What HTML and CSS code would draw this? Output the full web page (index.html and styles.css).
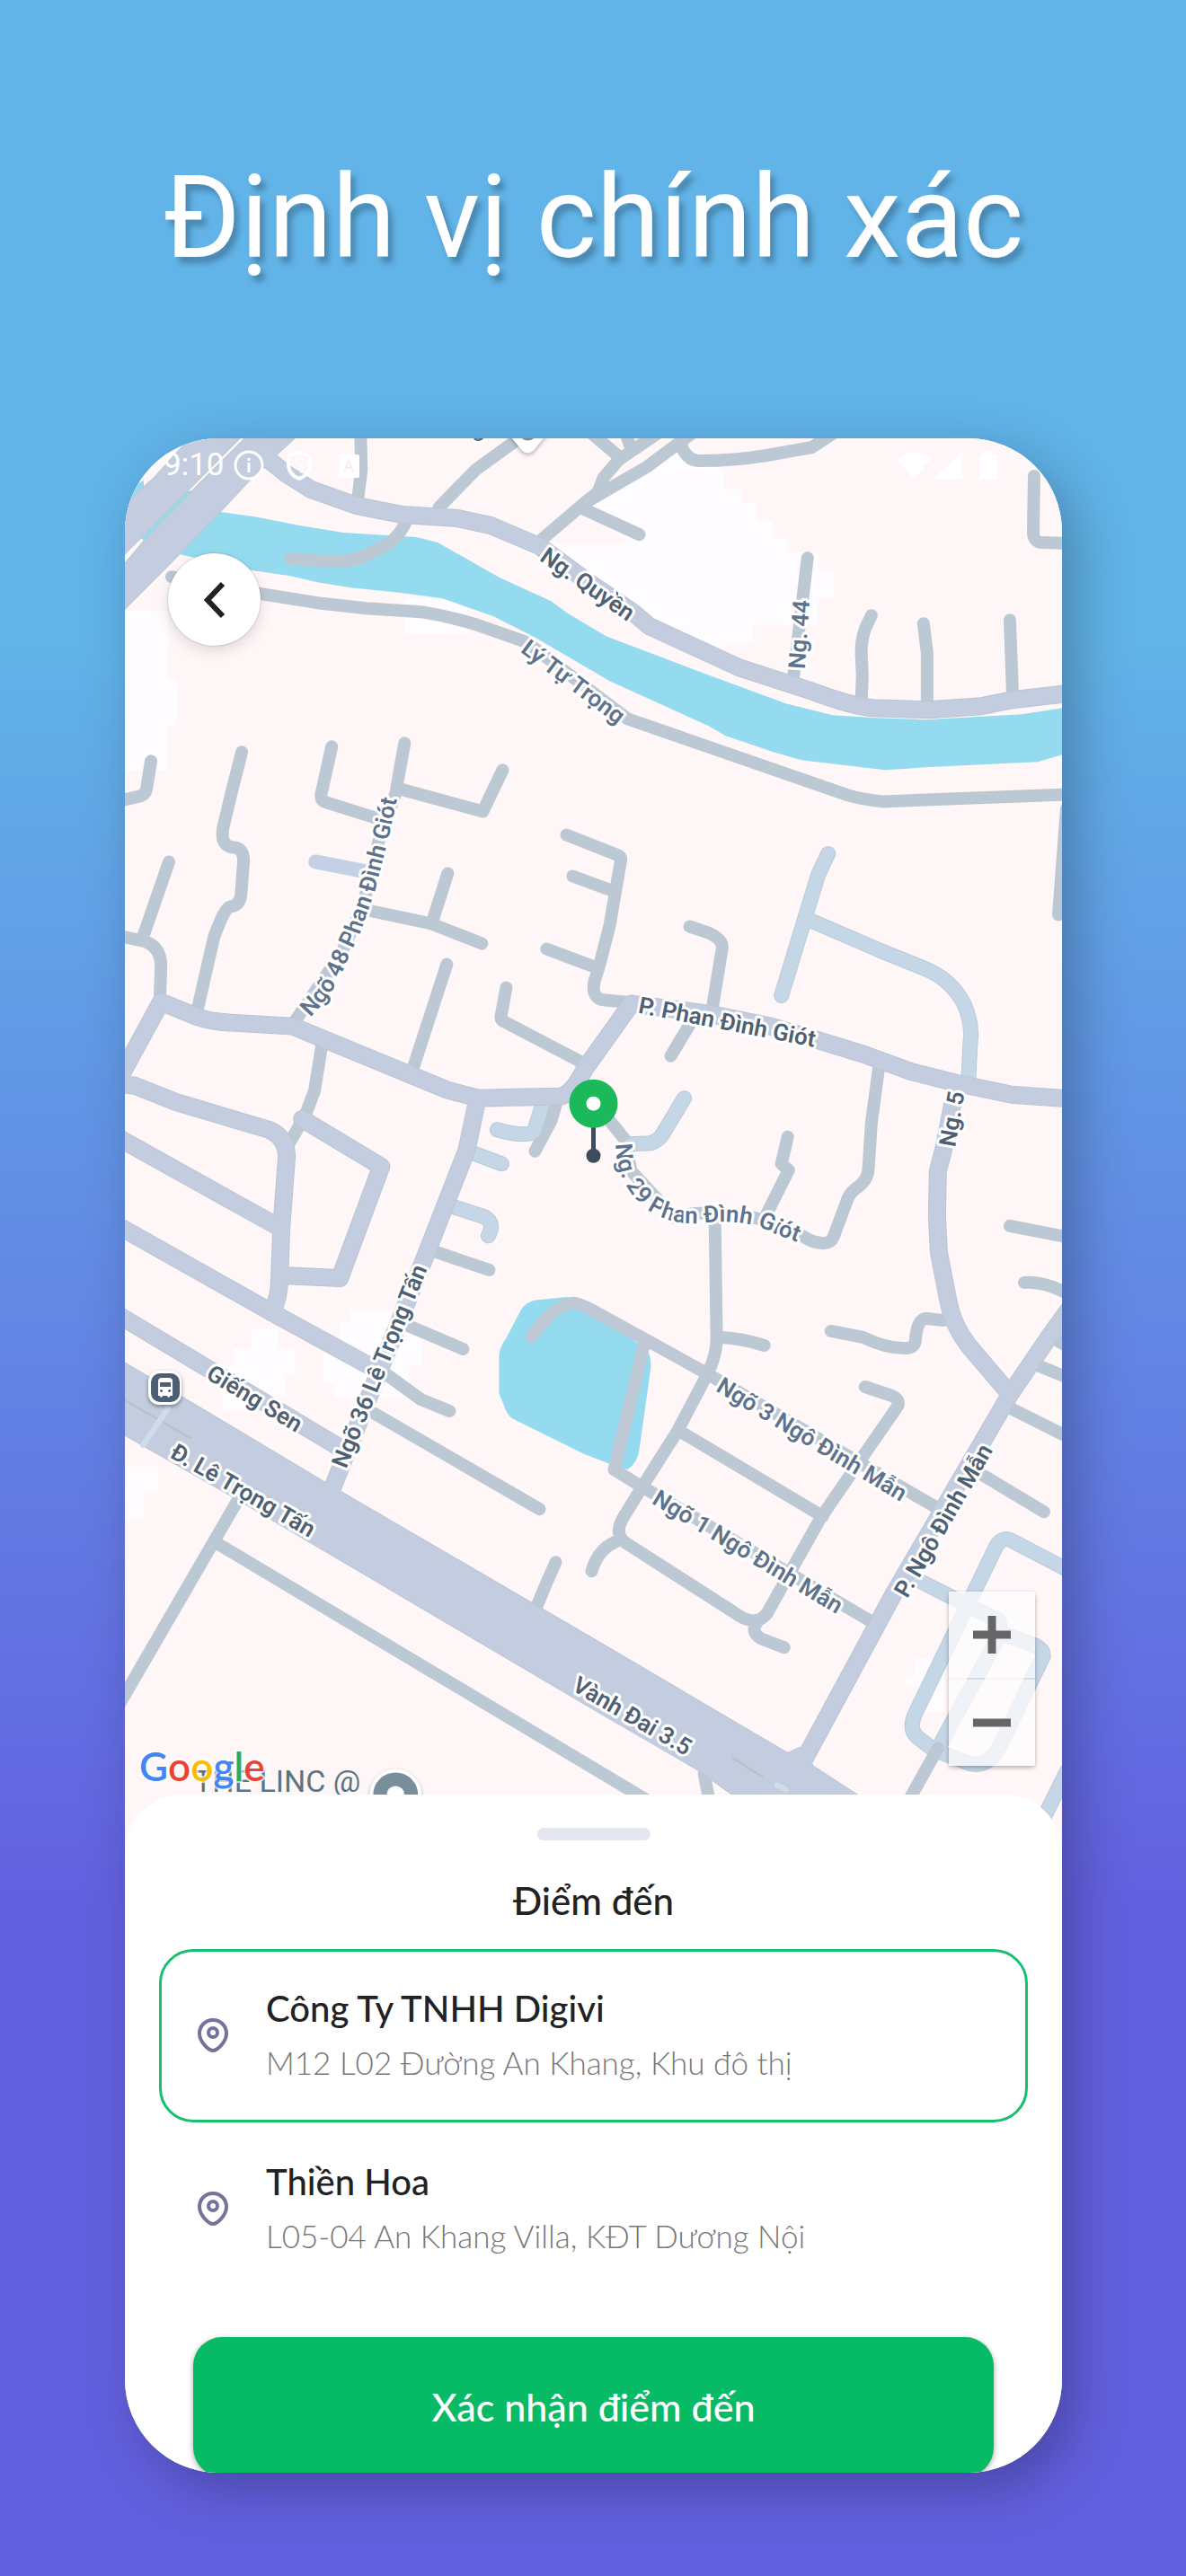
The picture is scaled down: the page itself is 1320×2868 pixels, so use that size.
FILE: index.html
```html
<!DOCTYPE html>
<html lang="vi">
<head>
<meta charset="utf-8">
<meta name="viewport" content="width=device-width, initial-scale=1">
<title>Định vị chính xác</title>
<link rel="stylesheet" href="styles.css">
</head>
<body>
<main class="promo">
  <h1 class="promo-title">Định vị chính xác</h1>

  <section class="phone">
    <div class="map">
      <svg class="map-canvas" viewBox="139 488 1042 1570" preserveAspectRatio="xMidYMin slice" role="img" aria-label="Bản đồ">
        <defs>
          <g id="major-roads">
            <path d="M299 512L319 528L346 545L397 563L448 573L509 577L546 585L600 608L650 645L702 680L722 697L822 743L905 770Q945 785 970 788L1032 790L1091 786L1125 779L1195 771"/>
            <path d="M702 1117L788 1128L857 1142L908 1157L960 1173L1012 1192L1063 1205L1125 1218L1195 1223"/>
            <path d="M702 1117L650 1190Q636 1218 623 1220L569 1221L532 1222L498 1213L326 1142L258 1138Q235 1137 221 1132L179 1115L130 1205"/>
            <path d="M130 1206L150 1208L198 1227L299 1257Q318 1265 319 1286L313 1367L311 1420Q311 1445 302 1460"/>
            <path d="M336 1245L424 1298L378 1422L313 1419"/>
            <path d="M130 1265L313 1367"/>
            <path d="M130 1363L302 1460L417 1523"/>
            <path d="M130 1462L377 1610"/>
            <path d="M531 1223L519 1280L471 1403L368 1660"/>
            <path d="M1063 1210L1049 1280L1043 1303L1042 1353L1044 1393L1055 1450Q1060 1475 1077 1497L1122 1550"/>
            <path d="M1190 1455L1167 1487L1124 1550L1091 1607L994 1773L893 1960"/>
          </g>
          <g id="light-roads">
            <path d="M921 950L910 973L869 1108M903 1025L977 1057L1029 1078Q1058 1090 1072 1117Q1082 1140 1079 1160L1077 1200"/>
            <path d="M526 1283L558 1295M505 1343L539 1354Q551 1361 543 1375"/>
            <path d="M553 1257Q585 1266 594 1259L603 1230"/>
            <path d="M702 1273L724 1272Q734 1268 738 1260L761 1222"/>
            <path d="M1190 1748L1125 1714Q1113 1708 1106 1724L1017 1908Q1010 1926 1022 1934L1039 1947L1078 1962Q1100 1968 1113 1940L1160 1843Q1161 1836 1152 1831L1113 1817L1111 1803L1070 1783L1015 1755M1111 1820L1046 1940"/>
            <path d="M1186 1971L1160 2024"/>
          </g>
        </defs>

        <rect class="land" x="139" y="488" width="1042" height="1570"/>
        <path class="block" d="M139 680H187V755H197V807H187V858H139ZM560 605H700L640 560L690 545L760 490L805 525V545H825V560H842V580H860V600H876V615H910V635H927V665H910V695H838V716H805V735L720 695L600 620ZM450 666H520V706H450ZM280 1478H310V1500H328V1530H318V1555H275V1570H248V1520H260V1500H280ZM390 1458H440V1480H470V1520H455V1555H372V1540H360V1490H378V1470H390ZM139 1632H176V1660H160V1690H139ZM1018 1845H1050V1905H1030V1875H1008V1865H1018Z"/>
        <path class="water" d="M245 570L282 575L333 585L382 593L431 596L463 598L487 604L556 643L613 669L632 683L674 708L771 745L874 783L926 796L974 799L1029 801L1136 795L1181 788V840L1154 848L1029 854L984 857L891 846L860 837L807 819L788 808L678 758L596 710L549 686L492 666L448 660L390 654L353 648L323 641L282 635L199 617ZM215 546L160 602L150 592L200 548ZM139 560V545L160 535V550Z"/>
        <path class="water" d="M578 1460Q584 1447 600 1446L630 1443L650 1450L710 1495Q724 1500 724 1520L711 1613Q709 1628 698 1635L676 1628L650 1618L573 1580Q566 1577 562 1568L555 1550V1508Q556 1498 564 1487Z"/>

        <g class="minor">
          <path d="M401 480L402 523L398 555M580 486L529 523L488 565M451 582Q440 605 417 613Q395 626 372 625L323 622"/>
          <path d="M603 600L650 560L665 548L671 532L688 512L735 480M650 560L719 520L770 482M655 480L688 508M695 480L702 500M757 493Q762 513 779 513Q815 513 853 507L903 498L930 480M650 567L711 595"/>
          <path d="M898 621L882 757M969 685L962 700Q957 715 958 730L959 752L958 777M1027 694L1031 727V782M1123 690L1126 772M1150 530L1149 592Q1149 603 1158 604L1190 605"/>
          <path d="M191 642L240 653L353 671L407 677L468 681Q500 686 529 695L586 715L698 800L943 885Q960 890 981 892L1190 884"/>
          <path d="M168 847L163 878Q162 884 156 886L130 892M269 837L258 880L248 922Q245 943 261 943Q271 944 271 958L268 997Q266 1008 256 1009Q250 1010 238 1043L220 1122"/>
          <path d="M369 831L357 885Q357 891 363 893L417 910M450 827L441 877L537 903L559 857M441 880L421 937L404 1007L380 1060L329 1135"/>
          <path d="M188 959L159 1043M130 1041L159 1047Q181 1053 179 1080L178 1107M414 1014L480 1028L536 1050M498 972L480 1028M497 1073L460 1187M563 1099L557 1132Q557 1136 563 1138L647 1182"/>
          <path d="M630 929L688 952Q692 954 690 960L678 1030L667 1073L661 1092Q657 1112 673 1113L695 1115M637 975L683 992M608 1056L664 1077M767 1031L788 1038Q805 1046 803 1056L792 1123M767 1140L746 1175M1186 900L1177 1018M358 1163L350 1213L340 1240L323 1270"/>
          <path d="M618 1230L613 1247L595 1281M431 1530L468 1557L500 1570M485 1393L544 1413M454 1475L515 1501M417 1573L600 1679"/>
          <path class="minor-ponds" d="M591 1487Q620 1448 640 1450Q652 1453 668 1463L784 1527M717 1493L683 1635L715 1655"/>
          <path d="M784 1527L1046 1680M719 1657L974 1807M795 1353L797 1490Q797 1510 784 1534L753 1593L715 1653L694 1687Q681 1708 698 1718L815 1793Q840 1812 853 1795L912 1690L953 1630L998 1565Q1002 1558 992 1553L962 1543M691 1713Q666 1720 658 1748M842 1805Q834 1815 846 1823L872 1833M802 1488Q825 1489 850 1497M757 1593L915 1687"/>
          <path d="M678 1247L695 1268L702 1303L750 1355Q770 1348 795 1350Q850 1350 901 1380Q922 1388 927 1376L943 1333Q946 1326 955 1320Q966 1312 966 1297L969 1250L977 1190M876 1265L869 1295L877 1302L853 1350"/>
          <path d="M1123 1364L1190 1377M1139 1427Q1162 1425 1190 1441M1156 1520L1190 1534M1124 1567L1190 1600M1094 1642L1161 1682M1170 1488L1190 1500M924 1481L960 1488Q985 1500 1005 1500Q1017 1501 1018 1491Q1020 1466 1031 1467L1049 1469"/>
          <path d="M264 1670L130 1901M243 1718L720 2003M783 1973L790 2010M618 1738L607 1763L597 1787"/>
        </g>
        <path class="alley" d="M351 959L407 970"/>
        <use class="light-case" href="#light-roads"/>
        <use class="light" href="#light-roads"/>
        <path class="minor" d="M1043 1945L1010 2004"/>
        <use class="major-case" href="#major-roads"/>
        <g class="highway">
          <path d="M139 560L171 532L211 488H267L139 617Z"/>
          <path d="M139 627L160 602L204 556L272 488H328L307 507L318 532L292 520L245 570L187 630L139 678Z"/>
          <path d="M139 1516L360 1648L377 1658L660 1823L876 1950L889 1944L905 1965L956 1998V2030H860L777 1970L660 1902L258 1665L139 1597Z"/>
        </g>
        <use class="major" href="#major-roads"/>
        <path class="highway-line" d="M139 1558L212 1600M815 1956L848 1977"/>
        <path class="crossing" d="M187 1567L159 1608M864 1986L874 1991"/>

        <g class="label label-strong">
          <text transform="translate(599 623) rotate(35)">Ng. Quyền</text>
          <text transform="translate(709 1127) rotate(11)">P. Phan Đình Giót</text>
          <text transform="translate(1062 1277) rotate(-80)">Ng. 5</text>
          <text transform="translate(385 1635) rotate(-68)">Ngõ 36 Lê Trọng Tấn</text>
          <text transform="translate(228 1533) rotate(31)">Giếng Sen</text>
          <text transform="translate(188 1621) rotate(30)">Đ. Lê Trọng Tấn</text>
          <text transform="translate(635 1880) rotate(30)">Vành Đai 3.5</text>
          <text transform="translate(1009 1779) rotate(-60)">P. Ngô Đình Mẫn</text>
        </g>
        <g class="label">
          <path id="lane-48" class="guide" d="M345 1132Q372 1105 384 1074L402 1034L417 992L434 925L450 850"/>
          <path id="lane-29" class="guide" d="M685 1273C684 1325 725 1366 780 1361Q830 1355 862 1373L940 1402"/>
          <text transform="translate(578 725) rotate(37)">Lý Tự Trọng</text>
          <text transform="translate(895 745) rotate(-86)">Ng. 44</text>
          <text><textPath href="#lane-48">Ngõ 48 Phan Đình Giót</textPath></text>
          <text><textPath href="#lane-29">Ng. 29 Phan Đình Giót</textPath></text>
          <text transform="translate(795 1547) rotate(31)">Ngõ 3 Ngô Đình Mẫn</text>
          <text transform="translate(724 1672) rotate(31)">Ngõ 1 Ngô Đình Mẫn</text>
          <text x="525" y="486">g</text>
        </g>

        <g class="poi">
          <path class="poi-pin" d="M563 480L580 501Q587 508 594 501L611 480Z"/>
          <path class="poi-fill" d="M573 480Q587 501 601 480Z"/>
          <text class="poi-name" x="216" y="1994">THE LINC @</text>
          <circle class="poi-pin" cx="440" cy="1997" r="29"/>
          <circle class="poi-fill" cx="440" cy="1997" r="25"/>
          <circle class="poi-hole" cx="440" cy="1997" r="10"/>
        </g>

        <g class="station">
          <rect class="station-edge" x="165" y="1525" width="37" height="38" rx="12"/>
          <rect class="station-fill" x="168" y="1528" width="32" height="32" rx="10"/>
          <path class="station-bus" fill-rule="evenodd" d="M180 1533H188Q192 1533 192 1537V1553H189V1554Q187 1556 186 1553H181Q180 1556 178 1554V1553H176V1537Q176 1533 180 1533ZM178 1538V1543H190V1538ZM179.500 1546A1.500 1.500 0 1 0 179.510 1546ZM188.500 1546A1.500 1.500 0 1 0 188.510 1546Z"/>
        </g>

        <g class="pin">
          <path class="pin-stem" d="M660 1250V1286"/>
          <circle class="pin-tip" cx="660" cy="1286" r="8"/>
          <circle class="pin-head" cx="660" cy="1228" r="27"/>
          <circle class="pin-eye" cx="660" cy="1228" r="8"/>
        </g>

        <text class="google" x="155" y="1982"><tspan fill="#4285f4">G</tspan><tspan fill="#ea4335">o</tspan><tspan fill="#fbbc05">o</tspan><tspan fill="#4285f4">g</tspan><tspan fill="#34a853">l</tspan><tspan fill="#ea4335">e</tspan></text>
      </svg>

      <div class="status-bar">
        <span class="clock">9:10</span>
        <svg class="status-left" viewBox="0 0 140 34" aria-hidden="true">
          <circle cx="17" cy="17" r="15" fill="none" stroke="#fff" stroke-width="3"/>
          <path d="M17 14V25M17 9V12" stroke="#fff" stroke-width="3"/>
          <path d="M73 2L85 7V16Q85 27 73 32Q61 27 61 16V7Z" fill="none" stroke="#fff" stroke-width="4" stroke-linejoin="round"/>
          <path d="M78 11Q69 8 69 13Q69 16 74 18Q78 21 74 26" fill="none" stroke="#fff" stroke-width="2" opacity=".6"/>
          <rect x="117" y="5" width="23" height="26" rx="2" fill="#fff"/>
          <path d="M123 24L128 11L133 24M125 20H131" fill="none" stroke="#f9edf1" stroke-width="2"/>
        </svg>
        <svg class="status-right" viewBox="0 0 114 34" aria-hidden="true">
          <path d="M0 10Q19-5 38 10L19 32ZM73 2V32H41ZM93 5H97V1H107V5H112V33H93Z" fill="#fff"/>
        </svg>
      </div>

      <button class="back" type="button" aria-label="Quay lại">
        <svg viewBox="0 0 24 42" aria-hidden="true"><path d="M21 3L4 21L21 39" fill="none" stroke="#222" stroke-width="6"/></svg>
      </button>

      <div class="zoom">
        <button type="button" aria-label="Phóng to"><svg viewBox="0 0 42 42" aria-hidden="true"><path d="M0 21H42M21 0V42"/></svg></button>
        <button type="button" aria-label="Thu nhỏ"><svg viewBox="0 0 42 42" aria-hidden="true"><path d="M0 21H42"/></svg></button>
      </div>
    </div>

    <div class="sheet">
      <div class="handle"></div>
      <h2 class="sheet-title">Điểm đến</h2>
      <ul class="places">
        <li>
          <button class="place place-selected" type="button" aria-pressed="true">
            <svg class="place-icon" viewBox="0 0 34 38" aria-hidden="true"><path d="M17 2C8 2 2 9 2 17C2 26 12 36 17 36S32 26 32 17C32 9 26 2 17 2Z"/><circle cx="17" cy="16" r="5"/></svg>
            <span class="place-text">
              <span class="place-name">Công Ty TNHH Digivi</span>
              <span class="place-address">M12 L02 Đường An Khang, Khu đô thị</span>
            </span>
          </button>
        </li>
        <li>
          <button class="place" type="button" aria-pressed="false">
            <svg class="place-icon" viewBox="0 0 34 38" aria-hidden="true"><path d="M17 2C8 2 2 9 2 17C2 26 12 36 17 36S32 26 32 17C32 9 26 2 17 2Z"/><circle cx="17" cy="16" r="5"/></svg>
            <span class="place-text">
              <span class="place-name">Thiền Hoa</span>
              <span class="place-address">L05-04 An Khang Villa, KĐT Dương Nội</span>
            </span>
          </button>
        </li>
      </ul>
      <button class="confirm" type="button">Xác nhận điểm đến</button>
    </div>
  </section>
</main>
</body>
</html>
```
FILE: styles.css
```css
* {
  box-sizing: border-box;
}

body {
  margin: 0;
  min-height: 100vh;
  font-family: Lato, "Noto Sans", sans-serif;
  color: #222;
  background: linear-gradient(#61b3e8 0%, #61b3e8 25%, #6360e0 74%, #6360e0 100%);
}

button {
  margin: 0;
  padding: 0;
  border: 0;
  font: inherit;
  color: inherit;
  background: none;
  cursor: pointer;
}

/* Promo frame */
.promo {
  padding: 162px 138px 115px 139px;
}

.promo-title {
  margin: 0 0 166px;
  font-family: Roboto, "Noto Sans", sans-serif;
  font-size: 128px;
  font-weight: 400;
  line-height: 160px;
  text-align: center;
  white-space: nowrap;
  color: #fff;
  text-shadow: 5px 7px 6px rgba(0, 0, 0, 0.25);
}

.phone {
  overflow: hidden;
  border-radius: 104px;
  background: #fff;
  box-shadow: 16px 20px 60px rgba(0, 0, 0, 0.26);
}

/* Map */
.map {
  position: relative;
}

.map-canvas {
  display: block;
  width: 100%;
}

.land {
  fill: #fff7f7;
}

.block {
  fill: #fffcff;
}

.water {
  fill: #95dbef;
}

.minor,
.alley,
.light,
.light-case,
.major,
.major-case,
.highway-line,
.crossing {
  fill: none;
  stroke-linecap: round;
  stroke-linejoin: round;
}

.minor {
  stroke: #bcc9d5;
  stroke-width: 14px;
}

.minor-ponds {
  stroke: #bfc8d5;
}

.alley {
  stroke: #c4d0e5;
  stroke-width: 16px;
}

.light-case {
  stroke: #b9cad8;
  stroke-width: 17px;
}

.light {
  stroke: #c5d6e6;
  stroke-width: 15px;
}

.major-case {
  stroke: #b9c6d3;
  stroke-width: 20px;
}

.major {
  stroke: #c4cddf;
  stroke-width: 18px;
}

.highway {
  fill: #c4cddf;
  stroke: #b9c6d3;
  stroke-width: 1px;
}

.highway-line {
  stroke: #b2c1ce;
  stroke-width: 2px;
}

.crossing {
  stroke: #d0dcea;
  stroke-width: 6px;
}

.label {
  font: 600 26px Roboto, "Noto Sans", sans-serif;
  fill: #5f728b;
  stroke: #fff;
  stroke-width: 6px;
  stroke-linejoin: round;
  paint-order: stroke;
}

.label-strong {
  fill: #4f6073;
}

.guide {
  fill: none;
  stroke: none;
}

.poi-pin {
  fill: #fff;
  filter: drop-shadow(0 2px 2px rgba(0, 0, 0, 0.3));
}

.poi-fill {
  fill: #788f9b;
}

.poi-hole {
  fill: #fff;
}

.poi-name {
  font: 400 34px Roboto, "Noto Sans", sans-serif;
  fill: #5a7582;
}

.station-edge {
  fill: #fff;
  filter: drop-shadow(0 2px 2px rgba(0, 0, 0, 0.4));
}

.station-fill {
  fill: #4b6173;
}

.station-bus {
  fill: #fff;
}

.pin-stem {
  stroke: #3f4b5b;
  stroke-width: 5px;
}

.pin-tip {
  fill: #3f4b5b;
}

.pin-head {
  fill: #1cb95b;
}

.pin-eye {
  fill: #fff;
}

.google {
  font: 600 44px Lato, sans-serif;
  stroke: #fff;
  stroke-opacity: 0.7;
  stroke-width: 4px;
  paint-order: stroke;
}

/* Controls that float over the map */
.status-bar {
  position: absolute;
  top: 8px;
  left: 43px;
  right: 70px;
  display: flex;
  align-items: center;
  height: 44px;
  color: #fff;
  font-family: Roboto, "Noto Sans", sans-serif;
}

.clock {
  font-size: 35px;
  line-height: 44px;
}

.status-left {
  width: 140px;
  height: 34px;
  margin-left: 10px;
}

.status-right {
  width: 114px;
  height: 34px;
  margin-left: auto;
}

.back {
  position: absolute;
  top: 128px;
  left: 48px;
  display: grid;
  place-items: center;
  width: 103px;
  height: 103px;
  border-radius: 50%;
  background: #fff;
  box-shadow: 0 6px 16px rgba(0, 0, 0, 0.12), 0 0 2px rgba(0, 0, 0, 0.3);
}

.back svg {
  width: 24px;
  height: 42px;
}

.zoom {
  position: absolute;
  right: 30px;
  bottom: 94px;
  display: grid;
  gap: 2px;
  border-radius: 4px;
  background: rgba(235, 235, 235, 0.3);
  box-shadow: 0 2px 5px rgba(0, 0, 0, 0.3);
}

.zoom button {
  display: grid;
  place-items: center;
  width: 96px;
  height: 96px;
  background: rgba(255, 255, 255, 0.65);
}

.zoom svg {
  width: 42px;
  height: 42px;
  stroke: #666;
  stroke-width: 9px;
}

/* Destination sheet */
.sheet {
  position: relative;
  display: flex;
  flex-direction: column;
  margin-top: -62px;
  padding: 37px 38px 0;
  border-radius: 64px 64px 0 0;
  background: #fff;
}

.handle {
  align-self: center;
  width: 126px;
  height: 14px;
  border-radius: 7px;
  background: #e4e7f1;
}

.sheet-title {
  margin: 43px 0 30px;
  font-size: 42px;
  font-weight: 500;
  line-height: 48px;
  text-align: center;
}

.places {
  margin: 0 0 46px;
  padding: 0;
  list-style: none;
}

.place {
  display: flex;
  align-items: center;
  gap: 42px;
  width: 100%;
  height: 193px;
  padding: 0 40px;
  border: 3px solid transparent;
  border-radius: 38px;
  text-align: left;
}

.place-selected {
  border-color: #16c06f;
}

.place-icon {
  flex: none;
  width: 34px;
  height: 38px;
  fill: none;
  stroke: #74749b;
  stroke-width: 4px;
}

.place-text {
  display: grid;
  gap: 12px;
}

.place-name {
  font-size: 40px;
  font-weight: 500;
  line-height: 48px;
}

.place-address {
  font-size: 35px;
  font-weight: 300;
  line-height: 48px;
  color: #777;
}

.confirm {
  height: 155px;
  margin: 0 38px -4px;
  border-radius: 32px;
  font-size: 43px;
  font-weight: 500;
  color: #fff;
  background: #07ba66;
  box-shadow: 0 2px 6px rgba(0, 0, 0, 0.35);
}
```
